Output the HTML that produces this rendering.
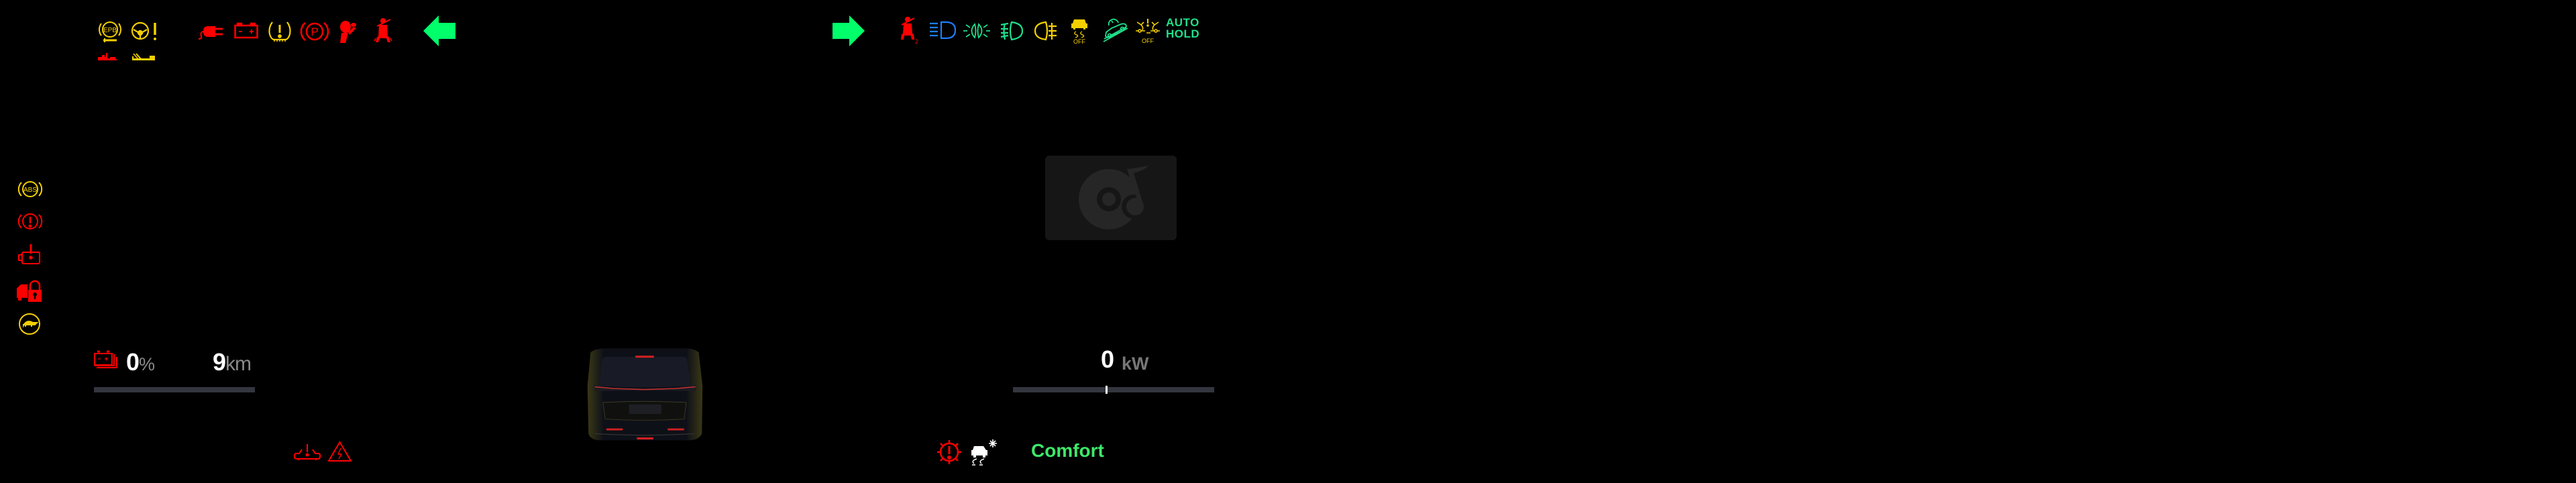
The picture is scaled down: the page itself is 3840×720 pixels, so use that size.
<!DOCTYPE html>
<html><head><meta charset="utf-8">
<style>
html,body{margin:0;padding:0;background:#000;width:3840px;height:720px;overflow:hidden;position:relative;font-family:"Liberation Sans","DejaVu Sans",sans-serif}
.a{position:absolute}
svg{position:absolute;overflow:visible}
</style></head><body>

<svg style="left:146px;top:29px" width="36" height="36" viewBox="0 0 36 36" fill="none" stroke="#f5d000" stroke-width="2">
<circle cx="18" cy="15" r="11"/><path d="M5 6 A15 15 0 0 0 5 24 M31 6 A15 15 0 0 1 31 24"/>
<text x="18" y="19" font-size="10" fill="#f5d000" stroke="none" text-anchor="middle" font-family="Liberation Sans">EPB</text>
<path d="M8 31 H28" stroke-width="3"/><path d="M10 28 v6" stroke-width="2"/></svg>
<svg style="left:195px;top:30px" width="42" height="34" viewBox="0 0 42 34" fill="none" stroke="#f5d000" stroke-width="2.2">
<circle cx="14" cy="16" r="12"/><path d="M4 14 L14 20 L24 14 M14 20 V28"/><circle cx="14" cy="19" r="3" fill="#f5d000"/>
<path d="M36 4 V22" stroke-width="3.5"/><circle cx="36" cy="28" r="2" fill="#f5d000" stroke="none"/></svg>
<svg style="left:296px;top:34px" width="40" height="26" viewBox="0 0 40 26" fill="#f00" stroke="#f00" stroke-width="2">
<path d="M14 6 H24 V20 H14 Q8 20 8 13 Q8 6 14 6Z"/><path d="M24 9 H36 M24 17 H36" stroke-width="3"/><path d="M8 13 Q2 13 4 20 Q5 24 0 24" fill="none"/></svg>
<svg style="left:349px;top:34px" width="36" height="24" viewBox="0 0 36 24" fill="none" stroke="#f00" stroke-width="2.5">
<rect x="1.5" y="4" width="33" height="18"/><rect x="5" y="1" width="6" height="3" fill="#f00"/><rect x="25" y="1" width="6" height="3" fill="#f00"/>
<path d="M7 13 H12 M23 13 H29 M26 10 V16" stroke-width="2"/></svg>
<svg style="left:400px;top:31px" width="34" height="32" viewBox="0 0 34 32" fill="none" stroke="#f5d000" stroke-width="2.2">
<path d="M6 2 Q0 10 2 20 Q4 27 8 28 H26 Q30 27 32 20 Q34 10 28 2"/><path d="M17 6 V18" stroke-width="3"/><circle cx="17" cy="23" r="1.8" fill="#f5d000"/>
<path d="M9 28 v3 M13 28 v3 M17 28 v3 M21 28 v3 M25 28 v3" stroke-width="1.5"/></svg>
<svg style="left:449px;top:31px" width="40" height="32" viewBox="0 0 40 32" fill="none" stroke="#f00" stroke-width="2.5">
<circle cx="20" cy="16" r="12"/><path d="M6 3 A17 17 0 0 0 6 29 M34 3 A17 17 0 0 1 34 29"/>
<text x="20" y="22" font-size="17" fill="#f00" stroke="none" text-anchor="middle" font-family="Liberation Sans">P</text></svg>
<svg style="left:505px;top:28px" width="34" height="36" viewBox="0 0 34 36" fill="#f00">
<ellipse cx="10" cy="12" rx="8" ry="9"/><path d="M4 21 L14 21 L10 36 L2 36Z"/><ellipse cx="22" cy="9" rx="4" ry="3"/><path d="M14 20 L22 12 L26 14 L16 24Z"/></svg>
<svg style="left:556px;top:27px" width="30" height="38" viewBox="0 0 30 38" fill="#f00">
<circle cx="15" cy="4" r="4"/><path d="M9 10 H21 L22 28 H8Z"/><path d="M6 12 L26 2" stroke="#f00" stroke-width="2"/>
<path d="M6 28 Q15 24 24 28 L26 36 H22 L20 30 H10 L8 36 H4Z"/><path d="M4 30 L2 34 M26 30 L28 34" stroke="#f00" stroke-width="1.5"/></svg>
<svg style="left:631px;top:23px" width="48" height="46" viewBox="0 0 48 46"><path d="M0 23 L23 0 V11 H48 V35 H23 V46Z" fill="#00ff6a"/></svg>
<svg style="left:146px;top:79px" width="32" height="11" viewBox="0 0 32 11" fill="#f00"><path d="M0 6 H6 V3 H10 V6 H12 V0 H14 V8 H18 V6 H26 V9 H28 V11 H0Z"/></svg>
<svg style="left:197px;top:79px" width="34" height="11" viewBox="0 0 34 11" fill="#f5d000"><path d="M0 5 H2 V8 H26 V4 H34 V11 H0Z"/><path d="M6 1 L14 10" stroke="#f5d000" stroke-width="2"/><path d="M2 1 L10 10" stroke="#f5d000" stroke-width="1.5"/></svg>

<svg style="left:27px;top:264px" width="36" height="36" viewBox="0 0 36 36" fill="none" stroke="#f5d000" stroke-width="2">
<circle cx="18" cy="18" r="11"/><path d="M5 8 A14 14 0 0 0 5 28 M31 8 A14 14 0 0 1 31 28"/>
<text x="18" y="22" font-size="10" fill="#f5d000" stroke="none" text-anchor="middle">ABS</text></svg>
<svg style="left:27px;top:312px" width="36" height="36" viewBox="0 0 36 36" fill="none" stroke="#f00" stroke-width="2">
<circle cx="18" cy="18" r="11"/><path d="M5 8 A14 14 0 0 0 5 28 M31 8 A14 14 0 0 1 31 28"/><path d="M18 11 V21" stroke-width="2.5"/><circle cx="18" cy="25" r="1.5" fill="#f00"/></svg>
<svg style="left:27px;top:364px" width="36" height="32" viewBox="0 0 36 32" fill="none" stroke="#f00" stroke-width="2">
<rect x="6" y="12" width="26" height="17" rx="2"/><path d="M1 16 H6 V24 H1Z"/><path d="M19 0 V14" stroke-width="3"/><circle cx="19" cy="20" r="1.8" fill="#f00"/></svg>
<svg style="left:25px;top:416px" width="38" height="34" viewBox="0 0 38 34" fill="#f00">
<path d="M0 14 L6 8 H16 V28 H0Z"/><rect x="2" y="26" width="5" height="6"/><rect x="17" y="16" width="20" height="18"/><path d="M20 16 V10 A7 7 0 0 1 34 10 V16" fill="none" stroke="#f00" stroke-width="2.5"/>
<circle cx="27" cy="23" r="3" fill="#000"/><rect x="26" y="24" width="2" height="6" fill="#000"/></svg>
<svg style="left:27px;top:466px" width="34" height="34" viewBox="0 0 34 34" fill="none" stroke="#f5d000" stroke-width="2">
<circle cx="17" cy="17" r="15"/><path d="M8 19 Q13 10 22 15 L28 15 L25 18 H8Z" fill="#f5d000"/><path d="M11 18 v3 M20 18 v3" stroke-width="2"/></svg>

<svg style="left:140px;top:524px" width="38" height="28" viewBox="0 0 38 28" fill="none" stroke="#f00" stroke-width="2">
<rect x="1" y="3" width="26" height="17"/><path d="M5 0 h4 M19 0 h4" stroke-width="3"/><path d="M4 24 H34 V8 M30 4 V21 H1" /><path d="M6 11 h4 M16 11 h5 M18.5 8.5 v5" stroke-width="1.3"/></svg>
<div class="a" style="left:188px;top:519px;font-size:36px;font-weight:bold;color:#fff;letter-spacing:-1px">0<span style="font-size:27px;color:#8a8a8a;font-weight:normal">%</span></div>
<div class="a" style="left:317px;top:519px;font-size:36px;font-weight:bold;color:#fff;letter-spacing:-1px">9<span style="font-size:30px;color:#8a8a8a;font-weight:normal">km</span></div>
<div class="a" style="left:140px;top:577px;width:240px;height:8px;background:#33363e"></div>

<svg style="left:437px;top:662px" width="42" height="24" viewBox="0 0 42 24" fill="none" stroke="#f00" stroke-width="2">
<path d="M21 0 V12"/><circle cx="21" cy="16" r="1.5" fill="#f00"/><path d="M13 8 L9 14 H4 Q1 15 2 19 Q2 22 6 22 H36 Q40 22 40 19 Q41 15 38 14 H33 L29 8"/><path d="M8 22 v2 M34 22 v2"/></svg>
<svg style="left:489px;top:658px" width="35" height="30" viewBox="0 0 35 30" fill="none" stroke="#f00" stroke-width="2">
<path d="M17.5 1 L34 29 H1Z"/><path d="M19 10 L15 19 H20 L16 26" stroke-width="1.4"/></svg>

<svg style="left:868px;top:510px" width="186" height="155" viewBox="0 0 600 480">
<defs><linearGradient id="g" x1="0" x2="1"><stop offset="0" stop-color="#3a3816"/><stop offset=".14" stop-color="#0e1018"/><stop offset=".86" stop-color="#0e1018"/><stop offset="1" stop-color="#3a3816"/></linearGradient></defs>
<path d="M40 40 Q60 20 120 20 H490 Q540 20 560 40 L578 200 L575 430 Q560 465 500 462 H100 Q40 465 30 430 L25 200Z" fill="url(#g)"/>
<path d="M95 75 Q100 60 120 60 H480 Q500 60 505 75 L520 200 Q300 215 80 200Z" fill="#181a26"/>
<rect x="255" y="55" width="90" height="10" rx="4" fill="#d02020"/>
<path d="M55 195 L140 210 L300 215 L460 210 L548 195 L545 225 L300 222 L60 225Z" fill="#1c1c22"/>
<path d="M60 205 L150 213 L300 218 L450 213 L545 205" stroke="#c03030" stroke-width="5" fill="none"/>
<path d="M100 280 Q300 270 500 280 L490 360 Q300 372 110 360Z" fill="#10110f" stroke="#3a3820" stroke-width="3"/>
<rect x="225" y="290" width="155" height="45" fill="#1e1f24"/>
<rect x="115" y="405" width="80" height="9" rx="4" fill="#d02020"/><rect x="410" y="405" width="80" height="9" rx="4" fill="#d02020"/>
<rect x="262" y="448" width="80" height="10" rx="4" fill="#d02020"/>
<path d="M60 430 Q300 445 540 430" stroke="#333" stroke-width="4" fill="none"/>
</svg>

<svg style="left:1241px;top:23px" width="48" height="46" viewBox="0 0 48 46"><path d="M48 23 L25 0 V11 H0 V35 H25 V46Z" fill="#00ff6a"/></svg>
<svg style="left:1339px;top:25px" width="30" height="40" viewBox="0 0 30 40" fill="#f00">
<circle cx="14" cy="4" r="4"/><path d="M8 10 H20 L21 26 H7Z"/><path d="M5 12 L24 2" stroke="#f00" stroke-width="2"/>
<path d="M5 26 Q14 22 23 26 L24 34 H20 L19 28 H9 L8 34 H4Z"/><text x="25" y="40" font-size="9" fill="#f00">2</text></svg>
<svg style="left:1386px;top:31px" width="40" height="28" viewBox="0 0 40 28" fill="none" stroke="#1e7fff" stroke-width="2.2">
<path d="M17 2 H24 Q38 2 38 14 Q38 26 24 26 H17Z"/><path d="M0 4 H12 M0 10 H12 M0 16 H12 M0 22 H12"/></svg>
<svg style="left:1436px;top:34px" width="40" height="24" viewBox="0 0 40 24" fill="none" stroke="#1ee08a" stroke-width="1.8">
<path d="M17 2 Q8 12 17 22 Q20 12 17 2Z M23 2 Q32 12 23 22 Q20 12 23 2Z"/><path d="M0 12 H6 M34 12 H40 M4 3 L10 7 M4 21 L10 17 M36 3 L30 7 M36 21 L30 17"/></svg>
<svg style="left:1490px;top:31px" width="36" height="30" viewBox="0 0 36 30" fill="none" stroke="#1ee08a" stroke-width="2.2">
<path d="M18 2 Q34 4 34 15 Q34 26 18 28 Q14 15 18 2Z"/><path d="M2 6 L13 4 M2 12 H13 M2 18 H13 M2 24 L13 22 M8 4 Q5 15 8 28"/></svg>
<svg style="left:1541px;top:31px" width="36" height="30" viewBox="0 0 36 30" fill="none" stroke="#f5d000" stroke-width="2.2">
<path d="M18 2 Q2 4 2 15 Q2 26 18 28 Q22 15 18 2Z"/><path d="M22 8 H34 M22 15 H34 M22 22 H34 M27 3 V28"/></svg>
<svg style="left:1597px;top:25px" width="24" height="40" viewBox="0 0 24 40" fill="#f5d000">
<path d="M4 4 H20 L22 10 H24 V17 H0 V10 H2Z"/><rect x="3" y="17" width="3" height="2"/><rect x="18" y="17" width="3" height="2"/>
<path d="M7 22 Q2 25 8 27 Q12 29 6 31 M16 22 Q11 25 17 27 Q21 29 15 31" fill="none" stroke="#f5d000" stroke-width="1.3"/>
<text x="12" y="40" font-size="9" text-anchor="middle">OFF</text></svg>
<svg style="left:1643px;top:26px" width="40" height="38" viewBox="0 0 40 38" fill="none" stroke="#1ee08a" stroke-width="1.8">
<path d="M3 32 L36 14 M2 36 L38 16"/><path d="M5 28 L6 22 L14 16 L28 10 Q35 8 36 13 L34 18 L8 30Z"/><circle cx="11" cy="27" r="2.5"/><circle cx="30" cy="17" r="2.5"/>
<path d="M10 12 A7 7 0 0 1 24 8" /><path d="M14 5 L16 8"/></svg>
<svg style="left:1693px;top:27px" width="38" height="38" viewBox="0 0 38 38" fill="none" stroke="#f5d000" stroke-width="1.6">
<path d="M18 1 V8" stroke-width="2"/><circle cx="18" cy="11" r="1" fill="#f5d000"/><path d="M2 6 L8 10 L12 6 M34 6 L28 10 L24 6"/><path d="M8 10 Q12 14 10 18 M28 10 Q24 14 26 18"/>
<circle cx="6" cy="19" r="2"/><circle cx="30" cy="19" r="2"/><path d="M0 19 H4 M8 19 H14 M22 19 H28 M32 19 H36 M16 22 H22"/>
<text x="18" y="37" font-size="9" fill="#f5d000" stroke="none" text-anchor="middle">OFF</text></svg>
<div class="a" style="left:1738px;top:25px;color:#1ee08a;font-size:17px;line-height:17px;font-weight:bold;letter-spacing:0.5px">AUTO<br>HOLD</div>

<div class="a" style="left:1558px;top:232px;width:196px;height:126px;border-radius:6px;background:#161616"></div>
<svg style="left:1558px;top:232px" width="196" height="126" viewBox="0 0 196 126">
<circle cx="95" cy="65" r="45" fill="#262626"/><circle cx="95" cy="65" r="18" fill="#161616"/><circle cx="95" cy="65" r="10" fill="#262626"/>
<circle cx="132" cy="76" r="18" fill="#161616"/><circle cx="134" cy="76" r="13" fill="#262626"/>
<path d="M122 20 L140 74 L146 72 L132 26 Q148 22 154 15 Q140 18 122 20Z" fill="#262626"/></svg>

<div class="a" style="left:1641px;top:515px;font-size:36px;font-weight:bold;color:#fff">0</div>
<div class="a" style="left:1672px;top:527px;font-size:27px;font-weight:bold;color:#777">kW</div>
<div class="a" style="left:1510px;top:577px;width:300px;height:8px;background:#33363e"></div>
<div class="a" style="left:1648px;top:575px;width:3px;height:12px;background:#fff"></div>

<svg style="left:1396px;top:655px" width="38" height="38" viewBox="0 0 38 38" fill="none" stroke="#f00" stroke-width="2.5">
<circle cx="19" cy="19" r="13"/><path d="M19 1 V5 M19 33 V37 M1 19 H5 M33 19 H37 M6 6 L9 9 M32 6 L29 9 M6 32 L9 29 M32 32 L29 29"/><path d="M19 10 V22" stroke-width="3"/><circle cx="19" cy="27" r="1.8" fill="#f00"/></svg>
<svg style="left:1446px;top:655px" width="42" height="40" viewBox="0 0 42 40" fill="#fff">
<path d="M6 10 H20 L24 16 H26 V24 H2 V16 H4Z"/><rect x="5" y="24" width="4" height="3"/><rect x="19" y="24" width="4" height="3"/>
<path d="M10 29 Q1 32 6 36 M21 29 Q12 32 17 36 M3 38 H8 M14 38 H19" fill="none" stroke="#fff" stroke-width="1.5"/>
<path d="M34 0 V12 M28 6 H40 M30 2 L38 10 M38 2 L30 10" stroke="#fff" stroke-width="1.6"/></svg>
<div class="a" style="left:1537px;top:656px;font-size:28px;font-weight:bold;color:#3ee86a">Comfort</div>

</body></html>
